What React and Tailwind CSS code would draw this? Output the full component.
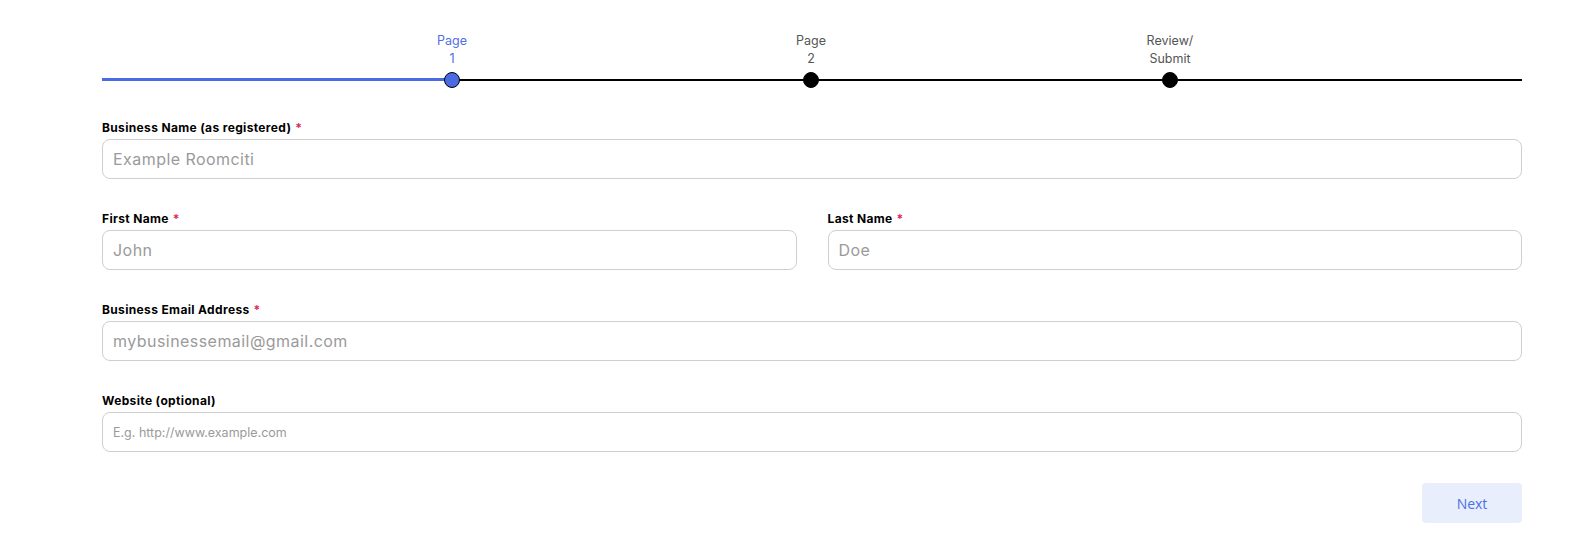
import React from "react";

const font = { fontFamily: "Inter, 'Open Sans', sans-serif" };

function Label({ children, required }) {
  return (
    <div className="h-[17px] mb-[3px] text-[12px] leading-[17px] font-bold text-black tracking-[0.35px]">
      {children}
      {required && <span className="text-[#e0245e] ml-[4px]">*</span>}
    </div>
  );
}

function Input({ placeholder, small }) {
  return (
    <input
      placeholder={placeholder}
      className={
        "w-full h-[40px] border border-[#cfcfcf] rounded-[8px] px-[10px] outline-none placeholder:text-[#9a9a9a] text-[#333] " +
        (small ? "text-[12.5px]" : "text-[16px] tracking-[0.45px]")
      }
      style={font}
    />
  );
}

function Step({ left, label1, label2, active }) {
  return (
    <>
      <div
        className={
          "absolute top-[32px] -translate-x-1/2 text-center text-[12.5px] leading-[18px] whitespace-nowrap " +
          (active ? "text-[#4f6ee6]" : "text-[#555555]")
        }
        style={{ left }}
      >
        <div>{label1}</div>
        <div>{label2}</div>
      </div>
      <div
        className={
          "absolute top-[72px] w-[16px] h-[16px] -translate-x-1/2 rounded-full border border-black " +
          (active ? "bg-[#4a6be3]" : "bg-black")
        }
        style={{ left }}
      />
    </>
  );
}

export default function App() {
  return (
    <div className="w-[1596px] h-[546px] bg-white" style={font}>
      <div className="ml-[102px] w-[1420px]">
        <div className="relative h-[119px]">
          <div className="absolute left-0 right-0 top-[79px] h-[1.5px] bg-black" />
          <div className="absolute left-0 w-[350px] top-[78px] h-[3px] bg-[#4a6be3]" />
          <Step left="350px" label1="Page" label2="1" active />
          <Step left="709px" label1="Page" label2="2" />
          <Step left="1068px" label1="Review/" label2="Submit" />
        </div>

        <div className="flex flex-col gap-[31px]">
          <div>
            <Label required>Business Name (as registered)</Label>
            <Input placeholder="Example Roomciti" />
          </div>
          <div className="flex gap-[31px]">
            <div className="flex-1">
              <Label required>First Name</Label>
              <Input placeholder="John" />
            </div>
            <div className="flex-1">
              <Label required>Last Name</Label>
              <Input placeholder="Doe" />
            </div>
          </div>
          <div>
            <Label required>Business Email Address</Label>
            <Input placeholder="mybusinessemail@gmail.com" />
          </div>
          <div>
            <Label>Website (optional)</Label>
            <Input placeholder="E.g. http://www.example.com" small />
          </div>
          <div className="flex justify-end">
            <button
              className="w-[100px] h-[40px] rounded-[4px] bg-[#e8eefc] text-[#4d6fe8] text-[14px]"
              style={{ fontFamily: "'Open Sans', sans-serif" }}
            >
              Next
            </button>
          </div>
        </div>
      </div>
    </div>
  );
}
